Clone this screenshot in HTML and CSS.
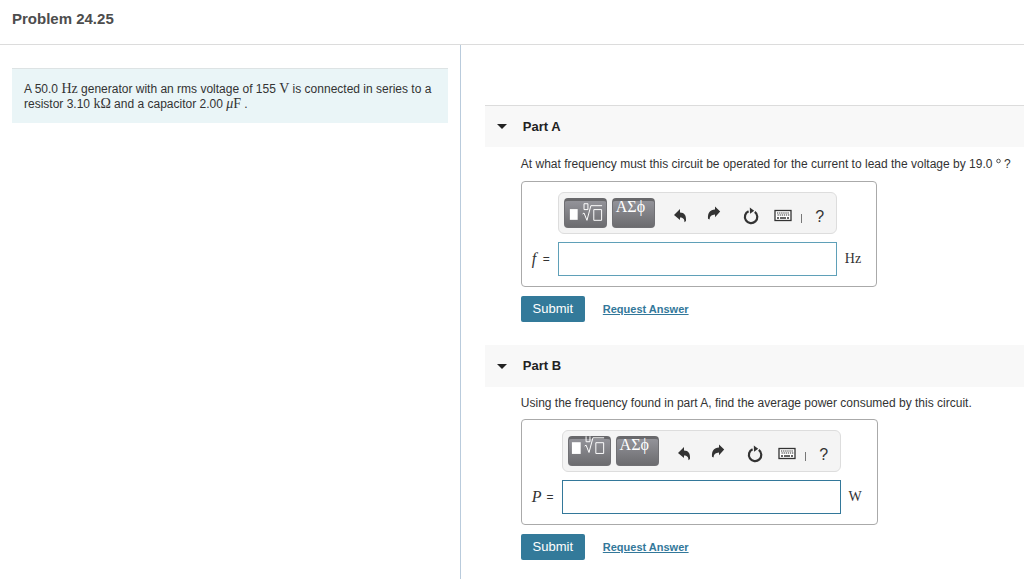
FILE: index.html
```html
<!DOCTYPE html>
<html lang="en">
<head>
<meta charset="utf-8">
<title>Problem 24.25</title>
<link rel="stylesheet" href="styles.css">
</head>
<body>
<svg class="sprite" aria-hidden="true">
  <symbol id="undo" viewBox="0 0 14 30"><path d="M1 17 7 11v3.6c4.500.2 6.400 2.800 6 8.400l-1.600 1.200c.3-3.400-1.400-4.700-4.400-4.800V22z"/></symbol>
  <symbol id="redo" viewBox="0 0 14 30"><path d="M13.200 13.400 8 8.400v3C3 12 .6 14.400 1 20.800l1.500.6c.3-3.300 2-4.700 5.500-4.900v2.700z"/></symbol>
  <symbol id="reset" viewBox="0 0 16 30"><path d="M5.600 13.200A6.200 6.200 0 1 0 11.800 13.900" fill="none" stroke="currentColor" stroke-width="2.200"/><path d="M6.800 9.600 11.200 12.700 7 15.800z"/></symbol>
  <symbol id="keyboard" viewBox="0 0 18 30"><rect x="1" y="12.500" width="16" height="10" fill="#fff" stroke="currentColor" stroke-width="1.300"/><path d="M3 15h12.500M3.500 17h12" fill="none" stroke="currentColor" stroke-width="1.200" stroke-dasharray="1.300 .8"/><path d="M3 20h2M6 20h6M13 20h2" fill="none" stroke="currentColor" stroke-width="1.300"/></symbol>
</svg>
<header class="page-header"><h1 class="page-title">Problem 24.25</h1></header>
<main class="columns">
  <section class="problem">
    <p class="statement">A 50.0 <span class="math">Hz</span> generator with an rms voltage of 155 <span class="math">V</span> is connected in series to a resistor 3.10 <span class="math">kΩ</span> and a capacitor 2.00 <span class="math"><i>μ</i>F</span> .</p>
  </section>
  <div class="parts">
    <section class="part">
      <h2 class="part-header part-header-first"><button class="part-toggle" type="button" aria-expanded="true"><span class="caret"></span>Part A</button></h2>
      <form class="part-body">
        <p class="prompt prompt-math">At what frequency must this circuit be operated for the current to lead the voltage by 19.0 <svg class="degree" viewBox="0 0 5 10" role="img" aria-label="degrees"><circle cx="2.500" cy="3" r="1.800"/></svg> ?</p>
        <div class="answer">
          <label class="symbol" for="frequency"><i>f</i> <span>=</span></label>
          <div class="editor">
            <div class="toolbar">
              <button class="template" type="button" aria-label="Templates"><svg class="template-icon" viewBox="0 0 43 30"><path d="M6 11h8v11H6z" fill="#fff"/><path d="M20.500 5.500h4v6h-4zM19 16l1.500-1 3 7.500 4-15H39M30.500 11.500h8v11h-8z" fill="none" stroke="#fff"/></svg></button>
              <button class="template template-greek" type="button">ΑΣϕ</button>
              <div class="tools">
                <button class="tool" type="button" aria-label="Undo"><svg class="arrow"><use href="#undo"/></svg></button>
                <button class="tool" type="button" aria-label="Redo"><svg class="arrow"><use href="#redo"/></svg></button>
                <button class="tool" type="button" aria-label="Reset"><svg class="reset"><use href="#reset"/></svg></button>
                <button class="tool" type="button" aria-label="Keyboard"><svg class="keyboard"><use href="#keyboard"/></svg></button>
                <span class="separator"></span>
                <button class="tool tool-help" type="button">?</button>
              </div>
            </div>
            <input class="entry entry-soft" id="frequency" type="text">
          </div>
          <span class="unit">Hz</span>
        </div>
        <div class="actions"><button class="submit" type="button">Submit</button><a class="request" href="#">Request Answer</a></div>
      </form>
    </section>
    <section class="part">
      <h2 class="part-header"><button class="part-toggle" type="button" aria-expanded="true"><span class="caret"></span>Part B</button></h2>
      <form class="part-body">
        <p class="prompt">Using the frequency found in part A, find the average power consumed by this circuit.</p>
        <div class="answer">
          <label class="symbol" for="power"><i>P</i> <span>=</span></label>
          <div class="editor">
            <div class="toolbar">
              <button class="template" type="button" aria-label="Templates"><svg class="template-icon" viewBox="0 0 43 30"><path d="M4 6h9v12H4z" fill="#fff"/><path d="M18.500 0v5.500h4V0M17 10l1.500-1 3 7.500 4-15H37M28.500 6.500h8v11h-8z" fill="none" stroke="#fff"/></svg></button>
              <button class="template template-greek" type="button">ΑΣϕ</button>
              <div class="tools">
                <button class="tool" type="button" aria-label="Undo"><svg class="arrow"><use href="#undo"/></svg></button>
                <button class="tool" type="button" aria-label="Redo"><svg class="arrow"><use href="#redo"/></svg></button>
                <button class="tool" type="button" aria-label="Reset"><svg class="reset"><use href="#reset"/></svg></button>
                <button class="tool" type="button" aria-label="Keyboard"><svg class="keyboard"><use href="#keyboard"/></svg></button>
                <span class="separator"></span>
                <button class="tool tool-help" type="button">?</button>
              </div>
            </div>
            <input class="entry" id="power" type="text">
          </div>
          <span class="unit">W</span>
        </div>
        <div class="actions"><button class="submit" type="button">Submit</button><a class="request" href="#">Request Answer</a></div>
      </form>
    </section>
  </div>
</main>
</body>
</html>
```
FILE: styles.css
```css
* { box-sizing: border-box; }
body {
  margin: 0;
  min-height: 100vh;
  display: flex;
  flex-direction: column;
  background: #fff;
  color: #333;
  font-family: "Liberation Sans", Arial, sans-serif;
  font-size: 12px;
}
button, input { font: inherit; color: inherit; }
button { border: 0; padding: 0; background: none; cursor: pointer; }
.sprite { display: none; }

.page-header { padding: 10px 12px 16px; border-bottom: 1px solid #dcdcdc; }
.page-title { margin: 0; font-size: 15px; line-height: 18px; color: #4d4d4d; }

.columns { flex: 1; display: grid; grid-template-columns: 45% 1fr; }
.problem { padding: 23px 12px; border-right: 1px solid #b9cbdc; }
.statement {
  margin: 0;
  padding: 13px 12px 11px;
  border-top: 1px solid #dde3e4;
  background: #eaf5f7;
  line-height: 15px;
}
.math { font-family: "Liberation Serif", "Times New Roman", serif; font-size: 14px; line-height: 1; }

.parts { padding: 60px 0 0 24px; }
.part-header { margin: 0; background: #f8f8f8; font-size: 13px; line-height: 42px; color: #222; }
.part-header-first { border-top: 1px solid #dcdcdc; line-height: 41px; }
.part-toggle { display: flex; align-items: center; gap: 16px; width: 100%; padding-left: 12px; font-weight: bold; }
.caret { border: 5px solid transparent; border-top-color: #222; border-bottom: 0; }

.part-body { padding: 8px 0 23px 36px; }
.prompt { margin: 0 0 8px; line-height: 16px; white-space: nowrap; }
.prompt-math { line-height: 18px; }
.degree { width: 5px; height: 10px; fill: none; stroke: #555; stroke-width: 1; }

.answer {
  display: inline-flex;
  align-items: flex-end;
  gap: 8px;
  padding: 10px 15px 10px 10px;
  border: 1px solid #aaa;
  border-radius: 4px;
  vertical-align: top;
}
.symbol { display: flex; justify-content: space-between; gap: 5px; min-width: 18px; line-height: 34px; }
.symbol i { font-family: "Liberation Serif", "Times New Roman", serif; font-size: 16px; }
.unit { font-family: "Liberation Serif", "Times New Roman", serif; font-size: 14px; line-height: 34px; }
.editor { display: grid; gap: 8px; }
.toolbar {
  display: flex;
  gap: 5px;
  width: 279px;
  padding: 5px;
  border: 1px solid #ddd;
  border-radius: 6px;
  background: #f4f4f4;
}
.template {
  display: flex;
  width: 43px;
  height: 30px;
  border: 1px solid #707074;
  border-top: 3px solid #68686b;
  border-radius: 4px;
  background: linear-gradient(#939399, #6c6c6f);
}
.template-icon { width: 43px; height: 30px; margin: -3px 0 0 -1px; }
.template-greek {
  padding-left: 3px;
  color: #fff;
  font-family: "Liberation Serif", "Times New Roman", serif;
  font-size: 16px;
  line-height: 12px;
}
.tools { flex: 1; display: grid; grid-template-columns: 33px 34px 41px 22px 15px 1fr; margin-left: 4px; }
.tool { display: flex; justify-content: center; }
.tool svg { height: 30px; fill: currentColor; }
.arrow { width: 14px; }
.reset { width: 16px; }
.keyboard { width: 18px; }
.separator { width: 1px; height: 9px; margin: 16px auto 0; background: #777; }
.tool-help { padding-top: 8px; font-size: 16px; line-height: 22px; }
.entry { width: 100%; height: 34px; padding: 0 8px; border: 1px solid #33789a; border-radius: 0; background: #fff; }
.entry-soft { border-color: #5fa0b8; }

.actions { display: flex; align-items: center; gap: 18px; margin-top: 9px; }
.submit { width: 64px; border-radius: 2px; background: #337a9a; color: #fff; font-size: 13px; line-height: 26px; }
.request { color: #33789a; font-size: 11px; font-weight: bold; }
```
